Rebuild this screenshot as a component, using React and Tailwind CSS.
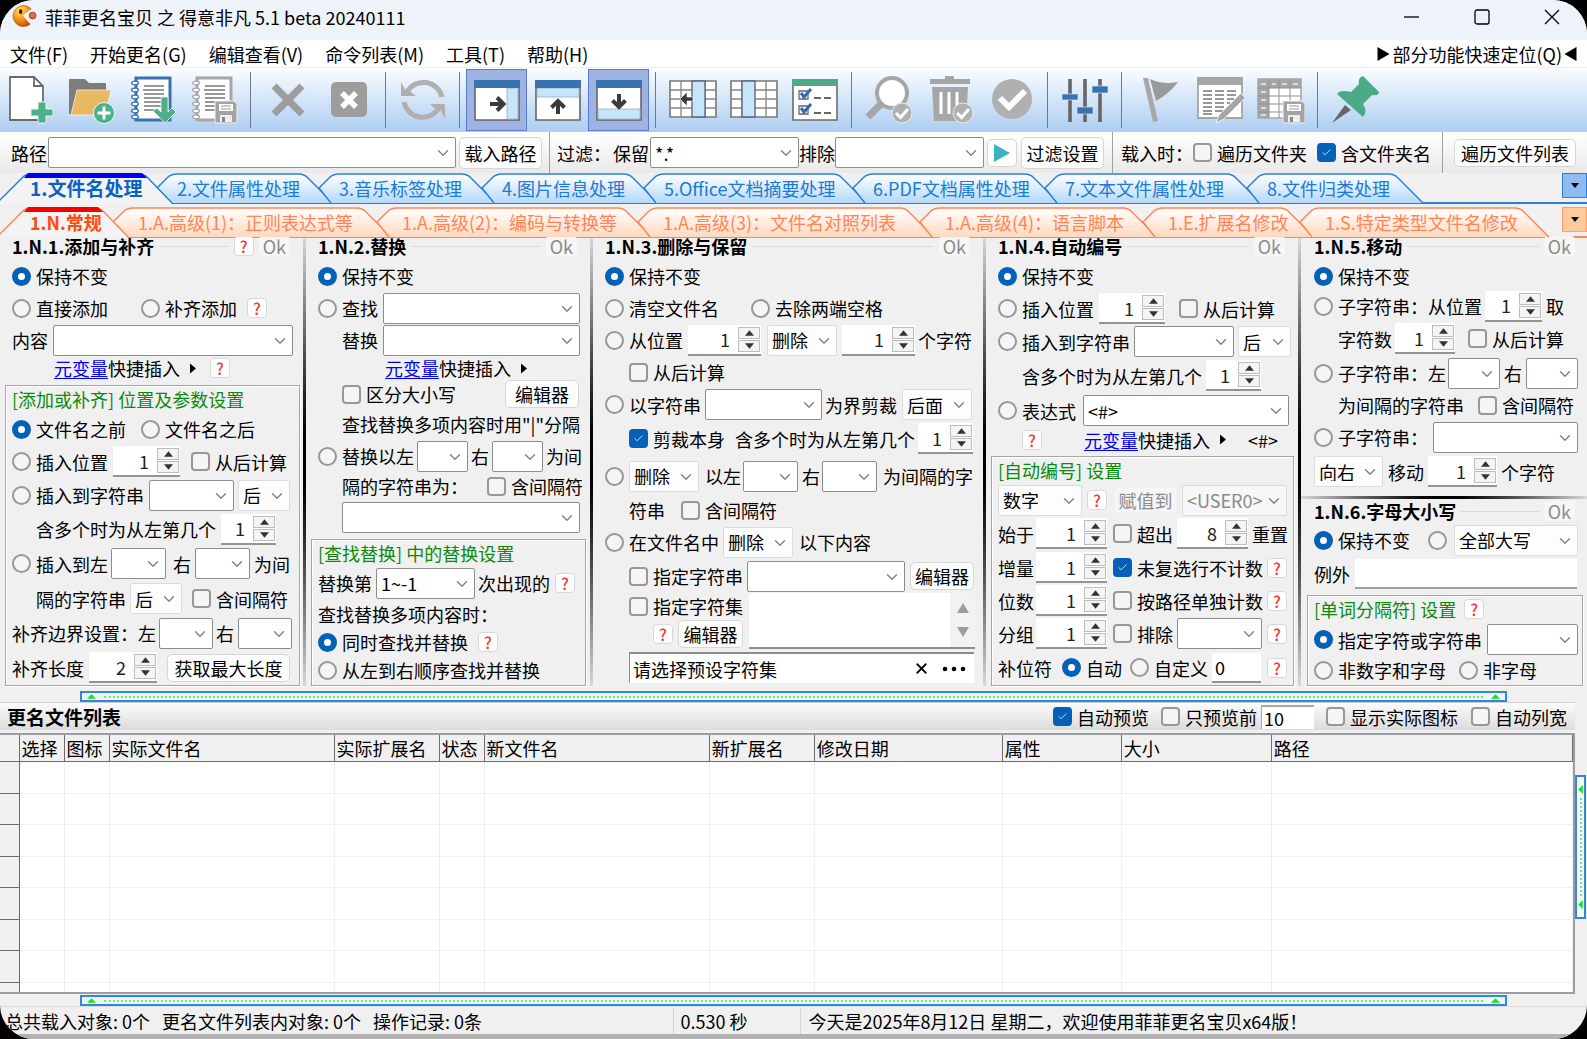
import React from "react";
import { Check, ChevronDown, X } from "lucide-react";

const MENUS = ["文件(F)", "开始更名(G)", "编辑查看(V)", "命令列表(M)", "工具(T)", "帮助(H)"];

const MAIN_TABS = [
  { label: "1.文件名处理", width: 157 },
  { label: "2.文件属性处理", width: 162 },
  { label: "3.音乐标签处理", width: 163 },
  { label: "4.图片信息处理", width: 162 },
  { label: "5.Office文档摘要处理", width: 209 },
  { label: "6.PDF文档属性处理", width: 192 },
  { label: "7.文本文件属性处理", width: 202 },
  { label: "8.文件归类处理", width: 162 },
];

const SUB_TABS = [
  { label: "1.N.常规", width: 113 },
  { label: "1.A.高级(1)：正则表达式等", width: 264 },
  { label: "1.A.高级(2)：编码与转换等", width: 261 },
  { label: "1.A.高级(3)：文件名对照列表", width: 282 },
  { label: "1.A.高级(4)：语言脚本", width: 223 },
  { label: "1.E.扩展名修改", width: 157 },
  { label: "1.S.特定类型文件名修改", width: 235 },
];

const COLUMNS = [
  { label: "", width: 19 },
  { label: "选择", width: 45 },
  { label: "图标", width: 45 },
  { label: "实际文件名", width: 225 },
  { label: "实际扩展名", width: 105 },
  { label: "状态", width: 45 },
  { label: "新文件名", width: 225 },
  { label: "新扩展名", width: 105 },
  { label: "修改日期", width: 188 },
  { label: "属性", width: 119 },
  { label: "大小", width: 150 },
  { label: "路径", width: 301 },
];

/* ---------- small controls ---------- */

function Row({ h = "h-8", className = "", children }) {
  return <div className={`flex items-center whitespace-nowrap ${h} ${className}`}>{children}</div>;
}

function Radio({ name, label, checked, className = "" }) {
  return (
    <label className={`flex shrink-0 items-center gap-[5px] ${className}`}>
      <input
        type="radio"
        name={name}
        defaultChecked={checked}
        aria-label={label || "按右侧选项处理"}
        className="size-[19px] shrink-0 appearance-none rounded-full border-2 border-[#989898] bg-[#f5f5f5] checked:border-[6px] checked:border-[#0560b8] checked:bg-white"
      />
      {label}
    </label>
  );
}

function CheckBox({ label, checked, className = "" }) {
  return (
    <label className={`flex shrink-0 items-center gap-[5px] ${className}`}>
      <span className="relative size-[19px] shrink-0">
        <input
          type="checkbox"
          defaultChecked={checked}
          className="peer block size-[19px] appearance-none rounded-[4px] border-2 border-[#989898] bg-[#f5f5f5] checked:border-[#0560b8] checked:bg-[#0560b8]"
        />
        <Check className="pointer-events-none absolute top-1 left-1 hidden size-[11px] text-[#cfe6fa] peer-checked:block" />
      </span>
      {label}
    </label>
  );
}

function Combo({ value = "", label, flat, disabled, className = "" }) {
  const look = flat
    ? "border-[#dcdcdc] bg-[#fdfdfd] pl-1"
    : "border-[#8c8c8c] bg-white pl-1";
  return (
    <span className={`relative shrink-0 ${className}`}>
      <select
        aria-label={label}
        disabled={disabled}
        className={`block h-[31px] w-full appearance-none rounded-[2px] border leading-none outline-none disabled:bg-[#f7f7f7] disabled:text-[#8a8a8a] ${look}`}
      >
        <option>{value}</option>
      </select>
      <ChevronDown
        className="pointer-events-none absolute top-[7px] right-1 size-[18px] text-[#808080]"
        strokeWidth={1.8}
      />
    </span>
  );
}

function Spin({ value, label, className = "" }) {
  return (
    <span className={`flex h-[31px] shrink-0 border-b-2 border-[#949494] bg-white ${className}`}>
      <input
        aria-label={label}
        defaultValue={value}
        className="w-0 min-w-0 flex-1 bg-white pr-2 text-right text-[#222] outline-none"
      />
      <span className="my-[2px] mr-px flex w-[22px] flex-col gap-px">
        <button type="button" aria-label={`${label} 增加`} className="flex flex-1 items-center justify-center border border-[#bdbdbd] bg-[#f4f4f4]">
          <svg viewBox="0 0 8 5" className="h-[6px] w-[9px]"><path d="M4 0 8 5H0Z" fill="#333" /></svg>
        </button>
        <button type="button" aria-label={`${label} 减少`} className="flex flex-1 items-center justify-center border border-[#bdbdbd] bg-[#f4f4f4]">
          <svg viewBox="0 0 8 5" className="h-[6px] w-[9px]"><path d="M4 5 8 0H0Z" fill="#333" /></svg>
        </button>
      </span>
    </span>
  );
}

function Help({ className = "" }) {
  return (
    <button
      type="button"
      className={`flex size-5 shrink-0 items-center justify-center rounded-[4px] border border-[#d8d8d8] bg-white text-base leading-none font-medium text-[#f5382f] ${className}`}
    >
      ?
    </button>
  );
}

function Btn({ children, disabled, className = "" }) {
  return (
    <button
      type="button"
      disabled={disabled}
      className={`h-[28px] shrink-0 rounded-[5px] border border-[#d6d6d6] bg-[#fdfdfd] text-center leading-none disabled:border-[#ececec] disabled:bg-[#f5f5f5] disabled:text-[#8a8a8a] ${className}`}
    >
      {children}
    </button>
  );
}

function MetaInsert({ className = "" }) {
  return (
    <span className={`flex shrink-0 items-center ${className}`}>
      <a href="#meta" className="text-[#0000f0] underline underline-offset-2">元变量</a>
      快捷插入
      <svg viewBox="0 0 6 10" className="ml-[10px] h-[11px] w-[6px]"><path d="M0 0 6 5 0 10Z" /></svg>
    </span>
  );
}

function PanelTitle({ children, help, className = "" }) {
  return (
    <div className={`flex h-4 shrink-0 items-center gap-[5px] ${className}`}>
      <h2 className="font-bold">{children}</h2>
      <span className="h-px flex-1 bg-[#dcdcdc]" />
      {help && <Help />}
      <button type="button" disabled className="h-5 rounded-[4px] bg-[#f6f6f6] px-1 leading-none text-[#8c8c8c]">
        Ok
      </button>
    </div>
  );
}

function Panel({ last, children }) {
  return (
    <section className="flex min-w-0">
      <div className="flex min-w-0 flex-1 flex-col">{children}</div>
      {!last && <div className="w-[3px] bg-linear-to-b from-[#d8d8d8] via-black to-[#d8d8d8]" />}
    </section>
  );
}

function Group({ title, help, children, className = "" }) {
  return (
    <div className={`mt-[5px] flex-1 border border-[#a6a6a6] pl-[6px] shadow-[inset_1px_1px_0_#fff,1px_1px_0_#fff] ${className}`}>
      <Row h="h-[27px]" className="pb-px text-[#0b8a0b]">
        <h3>{title}</h3>
        {help && <Help className="ml-2" />}
      </Row>
      {children}
    </div>
  );
}

/* ---------- toolbar icons ---------- */

const G = "#a6a6a6";

function Icon({ children }) {
  return <svg viewBox="0 0 48 48" className="size-12" fill="none">{children}</svg>;
}

function NotePad({ frame, page = "#fff" }) {
  return (
    <>
      <path d="M7 2H41V44H7Z" fill={page} stroke={frame} strokeWidth="3" />
      <path d="M15 10H35M14 14H35M15 18H35M15 22H35M15 26H35M15 30H32M15 34H30" stroke="#777" strokeWidth="1.4" />
      <g fill="#fff" stroke={frame} strokeWidth="1.3">
        {[7, 14, 21, 28, 35, 41].map((y) => (
          <ellipse key={y} cx="6" cy={y} rx="3.4" ry="1.8" />
        ))}
      </g>
    </>
  );
}

function Floppy({ x, y }) {
  return (
    <g transform={`translate(${x} ${y})`}>
      <path d="M0 0H19L22 3V22H0Z" fill="#a3a3a3" stroke="#f3f3f3" />
      <path d="M4 3H18V10H4Z" fill="#fff" />
      <path d="M6 5H16M6 8H16" stroke="#999" />
      <path d="M5 14H17V21H5Z" fill="#eee" />
      <path d="M7 16H10V21H7Z" fill="#888" />
    </g>
  );
}

function WindowIcon({ side }) {
  return (
    <Icon>
      <path d="M2 6H46V44H2Z" fill="#fff" stroke="#666" strokeWidth="1.6" />
      {side === "right" && <path d="M34 12H45V43H34Z" fill="#c5e6fa" stroke="#9ab" strokeWidth=".8" />}
      {side === "top" && <path d="M3 12H45V21H3Z" fill="#c5e6fa" stroke="#9ab" strokeWidth=".8" />}
      {side === "bottom" && <path d="M3 33H45V43H3Z" fill="#c5e6fa" stroke="#9ab" strokeWidth=".8" />}
      <path d="M1 4H47V12H1Z" fill="#3a72b0" />
      <g stroke="#3b3b3b" strokeWidth="4">
        {side === "right" && <path d="M17 28H30M24 21.500L30.500 28L24 34.500" />}
        {side === "top" && <path d="M24 38V25M17.500 31.500L24 25L30.500 31.500" />}
        {side === "bottom" && <path d="M24 18V31M17.500 24.500L24 31L30.500 24.500" />}
      </g>
    </Icon>
  );
}

function GridIcon({ arrow }) {
  return (
    <Icon>
      <path d="M1 5H47V41H1Z" fill="#fff" stroke="#777" strokeWidth="1.6" />
      <path d="M12 5V41M24 5V41M36 5V41M1 14H47M1 23H47M1 32H47" stroke="#858585" strokeWidth="1.3" />
      <path d={arrow ? "M23 5H36V41H23Z" : "M12 5H25V41H12Z"} fill="#c5e6fa" stroke="#667" strokeWidth="1.4" />
      {arrow && <path d="M11 23 18 16V21H24V25H18V30Z" fill="#3b3b3b" stroke="#fff" strokeWidth=".6" />}
    </Icon>
  );
}

function TickBadge() {
  return (
    <>
      <circle cx="37" cy="37" r="10" fill="#b0b0b0" stroke="#e6edf5" />
      <path d="M31 37 35.500 41.500 43 33" stroke="#fff" strokeWidth="3" />
    </>
  );
}

const TOOLS = [
  [
    { name: "新建", icon: (
      <Icon>
        <path d="M3 1H27L36 10V44H3Z" fill="#fff" stroke="#6b6b6b" strokeWidth="1.8" />
        <path d="M27 1V10H36" stroke="#6b6b6b" strokeWidth="1.8" />
        <path d="M31 26H39V33H46V40H39V47H31V40H24V33H31Z" fill="#4cb088" stroke="#e8f4f4" />
      </Icon>
    ) },
    { name: "添加文件夹", icon: (
      <Icon>
        <path d="M1 3H17L21 7H38V15H10L4 38H1Z" fill="#7d7d7d" />
        <path d="M9 14H43L37 39H3Z" fill="#e9b863" stroke="#eef3f8" strokeWidth=".8" />
        <circle cx="36" cy="37" r="10.500" fill="#4cb088" stroke="#eef6f6" />
        <path d="M36 30.500V43.500M29.500 37H42.500" stroke="#fff" strokeWidth="3" />
      </Icon>
    ) },
    { name: "载入列表", icon: (
      <Icon>
        <NotePad frame="#3a72b0" />
        <path d="M32 21H39V36L43 32L47 36L36 47L24 35L28 32L32 36Z" fill="#4cb088" stroke="#f4faf8" strokeWidth=".8" />
      </Icon>
    ) },
    { name: "保存列表", icon: (
      <Icon>
        <NotePad frame={G} />
        <Floppy x={25} y={25} />
      </Icon>
    ) },
  ],
  [
    { name: "移除", icon: <Icon><path d="M10 10 38 38M38 10 10 38" stroke="#9d9d9d" strokeWidth="7" /></Icon> },
    { name: "清空", icon: (
      <Icon>
        <rect x="6" y="6" width="36" height="35" rx="5" fill="#9d9d9d" />
        <path d="M17 17 31 31M31 17 17 31" stroke="#fff" strokeWidth="5.500" />
      </Icon>
    ) },
  ],
  [
    { name: "刷新", icon: (
      <Icon>
        <g stroke="#b0b0b0" strokeWidth="5">
          <path d="M8 16A19 19 0 0 1 43 21" />
          <path d="M41 30A19 19 0 0 1 5 26" />
        </g>
        <path d="M2 6V20H17L12 16 7 15Z" fill="#b0b0b0" />
        <path d="M46 43V28H31L35 32 41 33Z" fill="#b0b0b0" />
      </Icon>
    ) },
  ],
  [
    { name: "右侧面板", active: true, icon: <WindowIcon side="right" /> },
    { name: "上方面板", icon: <WindowIcon side="top" /> },
    { name: "下方面板", active: true, icon: <WindowIcon side="bottom" /> },
  ],
  [
    { name: "移动列", icon: <GridIcon arrow /> },
    { name: "列设置", icon: <GridIcon /> },
    { name: "选项", icon: (
      <Icon>
        <path d="M2 4H46V44H2Z" fill="#fff" stroke="#6b6b6b" strokeWidth="1.6" />
        <path d="M1 3H47V10H1Z" fill="#4fa886" />
        <g stroke="#666" strokeWidth="1.3">
          <path d="M8 15H17V23H8ZM8 30H17V38H8Z" />
          <path d="M23 22H30M33 22H40M23 37H30M33 37H40" strokeWidth="1.800" />
        </g>
        <path d="M10 17 13 21 20 13M10 32 13 36 20 28" stroke="#2f6cb5" strokeWidth="3" />
      </Icon>
    ) },
  ],
  [
    { name: "查找", icon: (
      <Icon>
        <path d="M16 28 3 41" stroke={G} strokeWidth="7" />
        <circle cx="27" cy="17" r="15" fill="#fff" stroke={G} strokeWidth="4" />
        <TickBadge />
      </Icon>
    ) },
    { name: "删除", icon: (
      <Icon>
        <path d="M19 0H28V3H44V8H4V3H19Z" fill={G} />
        <path d="M6 11H42L40 45H8Z" fill={G} />
        <path d="M15 16V38M23 16V38M31 16V31" stroke="#fff" strokeWidth="3" />
        <TickBadge />
      </Icon>
    ) },
    { name: "确认", icon: (
      <Icon>
        <circle cx="25" cy="23" r="20" fill="#b0b0b0" />
        <path d="M13 22 22 31 38 15" stroke="#fff" strokeWidth="6" />
      </Icon>
    ) },
  ],
  [
    { name: "设置", icon: (
      <Icon>
        <path d="M9 3V46M24 3V46M39 3V46" stroke="#666" strokeWidth="3.600" />
        <path d="M1 18H17V24H1ZM16 31H32V38H16ZM31 10H47V17H31Z" fill="#3a72b0" stroke="#e6eef7" strokeWidth=".6" />
      </Icon>
    ) },
  ],
  [
    { name: "标记", icon: (
      <Icon>
        <path d="M8 2H13L23 45L18 46Z" fill="#a8a8a8" />
        <path d="M15 3Q28 9 43 6Q35 17 21 25Z" fill="#9a9a9a" />
      </Icon>
    ) },
    { name: "编辑表格", icon: (
      <Icon>
        <path d="M2 3H46V42H2Z" fill="#fff" stroke={G} strokeWidth="1.800" />
        <path d="M1 1H47V9H1Z" fill={G} />
        <path d="M7 15H16M7 19H16M7 23H16M7 27H16M7 31H16M7 35H16M7 38H16M19 15H28M19 19H28M19 23H28M19 27H28M19 31H28M19 35H27M31 15H40M31 19H40M31 23H38M31 27H34" stroke="#777" strokeWidth="1.300" />
        <path d="M45 17 49 22 28 43 20 47 23 39Z" fill={G} stroke="#fff" strokeWidth=".8" />
      </Icon>
    ) },
    { name: "保存表格", icon: (
      <Icon>
        <path d="M1 3H44V42H1Z" fill="#fff" stroke={G} strokeWidth="1.500" />
        <path d="M1 3H44V12H1ZM1 12H12V42H1Z" fill={G} />
        <path d="M12 3V42M22 3V42M33 3V42M1 12H44M1 20H44M1 28H44M1 36H44" stroke="#929292" />
        <path d="M4 8H9M15 8H19M25 8H30M36 8H41M4 16H9M4 24H9M4 32H9M4 39H9" stroke="#eee" strokeWidth="1.500" />
        <Floppy x={26} y={25} />
      </Icon>
    ) },
  ],
  [
    { name: "置顶", icon: (
      <Icon>
        <path d="M1 47 14 29 20 34Z" fill="#666" />
        <path d="M32 0 48 16Q48 20 41 19L32 28Q37 36 32 41L6 18Q9 13 20 16L28 8Q27 1 32 0Z" fill="#4cab86" />
      </Icon>
    ) },
  ],
];

/* ---------- tab strips ---------- */

function TabStrip({ tabs, tone, label }) {
  const blue = tone === "blue";
  const line = blue ? "#2a80d8" : "#ff8458";
  return (
    <nav
      aria-label={label}
      className={`flex h-[31px] shrink-0 items-stretch border-b-2 ${blue ? "border-[#2a80d8]" : "border-[#ff8458]"}`}
    >
      <svg width="0" height="0" className="absolute">
        <linearGradient id={`fill-${tone}`} x2="0" y2="1">
          <stop offset="0" stopColor="#fff" />
          <stop offset="1" stopColor={blue ? "#b4d8fa" : "#ffd9bf"} />
        </linearGradient>
      </svg>
      {tabs.map((tab, i) => {
        const w = tab.width;
        const first = i === 0;
        const shape = first
          ? `M-4 31 L22 5 Q26 1 30 1 H${w - 18} Q${w - 13} 1 ${w - 9} 5 L${w + 16} 31`
          : `M12 30 L0 15 L10 5 Q14 1 20 1 H${w - 20} Q${w - 15} 1 ${w - 11} 5 L${w + 14} 30`;
        return (
          <button
            key={tab.label}
            type="button"
            style={{ width: w }}
            className={`relative shrink-0 text-left whitespace-nowrap ${
              first
                ? `z-10 pl-[30px] font-bold ${blue ? "text-[19px] text-[#0a62c4]" : "text-[#ff4a10]"}`
                : blue ? "pl-5 text-[#1b7bd6]" : "pl-[25px] text-[#ff8458]"
            }`}
          >
            <svg className="absolute top-0 left-0 overflow-visible" width={w} height="31">
              <path d={shape} fill={first ? "#f3f3f3" : `url(#fill-${tone})`} stroke={line} strokeWidth="1.5" />
              {first && <path d={`M24 5 L28 0 H${w - 15} L${w - 10} 5Z`} fill={blue ? "#0000f5" : "#f50000"} />}
            </svg>
            <span className="relative leading-[30px]">{tab.label}</span>
          </button>
        );
      })}
      <button
        type="button"
        aria-label="更多"
        className={`mb-1 ml-auto flex w-[25px] items-center justify-center border ${
          blue ? "border-[#2a80d8] bg-[#8fbcf0]" : "border-[#ffa070] bg-[#ffcb9c]"
        }`}
      >
        <svg viewBox="0 0 8 5" className="h-[5px] w-2"><path d="M0 0H8L4 5Z" /></svg>
      </button>
    </nav>
  );
}

function Splitter({ vertical }) {
  if (vertical) {
    return (
      <div className="mt-[42px] mr-px flex h-[144px] w-[11px] shrink-0 flex-col items-center border-2 border-[#3487d4] bg-[#f4fbff] py-2">
        <svg viewBox="0 0 5 10" className="h-[9px] w-[5px]"><path d="M5 0V10L0 5Z" fill="#10e810" /></svg>
        <span className="my-1 flex-1 border-l-2 border-dotted border-[#7fdc7f]" />
        <svg viewBox="0 0 5 10" className="h-[9px] w-[5px]"><path d="M5 0V10L0 5Z" fill="#10e810" /></svg>
      </div>
    );
  }
  return (
    <div className="mx-20 flex h-[11px] items-center gap-2 border-2 border-[#3487d4] bg-[#eaf7fd] px-[5px]">
      <svg viewBox="0 0 10 5" className="h-[5px] w-[9px]"><path d="M0 5H10L5 0Z" fill="#10e810" /></svg>
      <span className="flex-1 border-t-2 border-dotted border-[#7fdc7f]" />
      <svg viewBox="0 0 10 5" className="h-[5px] w-[9px]"><path d="M0 5H10L5 0Z" fill="#10e810" /></svg>
    </div>
  );
}

/* ---------- window parts ---------- */

function TitleBar() {
  return (
    <header className="flex h-10 shrink-0 items-center bg-[#edf3f9] pb-[7px] pl-3">
      <svg viewBox="0 0 26 24" className="h-[23px] w-[25px]">
        <defs>
          <radialGradient id="pac" cx=".4" cy=".25" r=".8">
            <stop offset="0" stopColor="#ffe45c" />
            <stop offset=".5" stopColor="#f8981c" />
            <stop offset="1" stopColor="#c04808" />
          </radialGradient>
        </defs>
        <path d="M11 11 20 4A11 11 0 1 0 19 20Z" fill="url(#pac)" stroke="#b04a10" strokeWidth=".6" />
        <path d="M11 11 20 4Q16 8 16 12Q16 17 19 20Z" fill="#fff3d0" />
        <ellipse cx="9" cy="7" rx="1.800" ry="2.500" fill="#3a1a08" />
        <circle cx="21.500" cy="11" r="3.500" fill="#d86a5c" stroke="#a03a34" />
      </svg>
      <h1 className="ml-2">菲菲更名宝贝 之 得意非凡 5.1 beta 20240111</h1>
      <div className="mr-[27px] ml-auto flex gap-[54px]">
        <button type="button" aria-label="最小化" className="size-4">
          <svg viewBox="0 0 16 16" stroke="#000" strokeWidth="1.300"><path d="M0 8H15" /></svg>
        </button>
        <button type="button" aria-label="最大化" className="size-4">
          <svg viewBox="0 0 16 16" fill="none" stroke="#000" strokeWidth="1.300"><rect x="1" y="1" width="14" height="14" rx="2" /></svg>
        </button>
        <button type="button" aria-label="关闭" className="size-4">
          <svg viewBox="0 0 16 16" stroke="#000" strokeWidth="1.300"><path d="M1 1 15 15M15 1 1 15" /></svg>
        </button>
      </div>
    </header>
  );
}

function MenuBar() {
  return (
    <nav className="flex h-7 shrink-0 items-center gap-[22px] border-b border-[#f0f0f0] bg-white px-[10px]">
      {MENUS.map((m) => (
        <button key={m} type="button">{m}</button>
      ))}
      <button type="button" className="ml-auto flex items-center">
        <svg viewBox="0 0 12 14" className="mr-[2px] h-[14px] w-[13px]"><path d="M0 0 12 7 0 14Z" /></svg>
        部分功能快速定位(Q)
        <svg viewBox="0 0 12 14" className="ml-[2px] h-[14px] w-[13px]"><path d="M12 0 0 7 12 14Z" /></svg>
      </button>
    </nav>
  );
}

function Toolbar() {
  return (
    <div className="flex h-16 shrink-0 items-stretch bg-linear-to-b from-[#fbfdff] to-[#adcdf1] py-px">
      {TOOLS.map((group, i) => (
        <React.Fragment key={group[0].name}>
          {i > 0 && <span className="mx-[6px] my-[3px] w-px bg-[#6f7a86]" />}
          {group.map((t) => (
            <button
              key={t.name}
              type="button"
              aria-label={t.name}
              className={`flex w-[61px] items-center justify-center ${
                t.active ? "border border-[#5a7cd0] bg-[#9fb3e2]" : ""
              }`}
            >
              {t.icon}
            </button>
          ))}
        </React.Fragment>
      ))}
    </div>
  );
}

function PathBar() {
  return (
    <div className="flex h-[41px] shrink-0 items-center bg-linear-to-b from-white to-[#e9e9e9] pl-[11px] whitespace-nowrap">
      路径
      <Combo label="路径" className="ml-px min-w-0 flex-1" />
      <Btn className="ml-[3px] h-[32px] w-[83px]">载入路径</Btn>
      <span className="mx-[7px] w-px self-stretch bg-[#a0a0a0]" />
      <span>过滤：</span>
      <span className="ml-[2px]">保留</span>
      <Combo label="保留" value="*.*" className="ml-px w-[149px]" />
      排除
      <Combo label="排除" className="w-[149px]" />
      <Btn className="ml-[3px] flex w-[30px] items-center justify-center">
        <svg viewBox="0 0 16 18" className="h-[18px] w-4"><path d="M0 0 16 9 0 18Z" fill="#3fb3bd" /></svg>
      </Btn>
      <Btn className="ml-1 h-[32px] w-[83px]">过滤设置</Btn>
      <span className="mx-[8px] w-px self-stretch bg-[#a0a0a0]" />
      载入时：
      <CheckBox label="遍历文件夹" />
      <CheckBox label="含文件夹名" checked className="ml-[10px]" />
      <span className="mx-[11px] w-px self-stretch bg-[#a0a0a0]" />
      <Btn className="mr-[11px] w-[122px]">遍历文件列表</Btn>
    </div>
  );
}

function AddPanel() {
  return (
    <Panel>
      <PanelTitle help className="mr-[13px] ml-3">1.N.1.添加与补齐</PanelTitle>
      <Row className="mt-[6px] pl-3"><Radio name="add" label="保持不变" checked /></Row>
      <Row className="pl-3">
        <Radio name="add" label="直接添加" />
        <Radio name="add" label="补齐添加" className="ml-[33px]" />
        <Help className="ml-[10px]" />
      </Row>
      <Row className="pl-3">
        内容
        <Combo label="内容" className="mr-[10px] ml-[5px] flex-1" />
      </Row>
      <Row h="h-6" className="pl-[54px]">
        <MetaInsert />
        <Help className="ml-[14px]" />
      </Row>
      <Group title="[添加或补齐] 位置及参数设置" className="mr-[3px] ml-[5px]">
        <Row>
          <Radio name="add-pos" label="文件名之前" checked />
          <Radio name="add-pos" label="文件名之后" className="ml-[15px]" />
        </Row>
        <Row h="h-[33px]">
          <Radio name="add-pos" label="插入位置" />
          <Spin label="插入位置" value="1" className="ml-[5px] w-[67px]" />
          <CheckBox label="从后计算" className="ml-[11px]" />
        </Row>
        <Row h="h-[34px]">
          <Radio name="add-pos" label="插入到字符串" />
          <Combo label="字符串" className="ml-[5px] w-[85px]" />
          <Combo flat label="方向" value="后" className="ml-1 w-[52px]" />
        </Row>
        <Row h="h-[34px]" className="pl-6">
          含多个时为从左第几个
          <Spin label="第几个" value="1" className="ml-[5px] w-[55px]" />
        </Row>
        <Row h="h-[35px]">
          <Radio name="add-pos" label="插入到左" />
          <Combo label="左" className="ml-[3px] mr-[7px] w-[55px]" />
          右
          <Combo label="右" className="mr-1 ml-1 w-[55px]" />
          为间
        </Row>
        <Row h="h-[35px]" className="pl-6">
          隔的字符串
          <Combo flat label="方向" value="后" className="ml-1 w-[52px]" />
          <CheckBox label="含间隔符" className="ml-[10px]" />
        </Row>
        <Row h="h-[34px]">
          补齐边界设置：左
          <Combo label="左边界" className="mr-[3px] ml-[3px] w-[54px]" />
          右
          <Combo label="右边界" className="ml-1 w-[54px]" />
        </Row>
        <Row h="h-[35px]">
          补齐长度
          <Spin label="补齐长度" value="2" className="ml-[5px] w-[68px]" />
          <Btn className="ml-[10px] w-[123px]">获取最大长度</Btn>
        </Row>
      </Group>
    </Panel>
  );
}

function ReplacePanel() {
  return (
    <Panel>
      <PanelTitle className="mr-[13px] ml-3">1.N.2.替换</PanelTitle>
      <Row className="mt-[6px] pl-3"><Radio name="rep" label="保持不变" checked /></Row>
      <Row className="pl-3">
        <Radio name="rep" label="查找" />
        <Combo label="查找" className="mr-[10px] ml-[5px] flex-1" />
      </Row>
      <Row className="pl-9">
        替换
        <Combo label="替换" className="mr-[10px] ml-[5px] flex-1" />
      </Row>
      <Row h="h-6" className="pl-[79px]"><MetaInsert /></Row>
      <Row h="h-7" className="pl-9">
        <CheckBox label="区分大小写" />
        <Btn className="mr-[11px] ml-auto w-[74px]">编辑器</Btn>
      </Row>
      <Row className="pl-9">查找替换多项内容时用"|"分隔</Row>
      <Row className="pl-3">
        <Radio name="rep" label="替换以左" />
        <Combo label="左" className="mr-[3px] ml-[3px] w-[51px]" />
        右
        <Combo label="右" className="mr-[3px] ml-[3px] w-[51px]" />
        为间
      </Row>
      <Row h="h-7" className="pl-9">
        隔的字符串为：
        <CheckBox label="含间隔符" className="ml-[19px]" />
      </Row>
      <Row h="h-[34px]" className="pl-9">
        <Combo label="替换字符串" className="mr-[10px] flex-1" />
      </Row>
      <Group title="[查找替换] 中的替换设置" className="mr-[4px] ml-[5px]">
        <Row>
          替换第
          <Combo label="第几次" value="1~-1" className="mr-[3px] ml-1 w-[99px]" />
          次出现的
          <Help className="ml-[5px]" />
        </Row>
        <Row h="h-[29px]">查找替换多项内容时：</Row>
        <Row h="h-7">
          <Radio name="rep-order" label="同时查找并替换" checked />
          <Help className="ml-[10px]" />
        </Row>
        <Row h="h-7"><Radio name="rep-order" label="从左到右顺序查找并替换" /></Row>
      </Group>
    </Panel>
  );
}

function DeletePanel() {
  return (
    <Panel>
      <PanelTitle className="mr-[13px] ml-3">1.N.3.删除与保留</PanelTitle>
      <Row className="mt-[6px] pl-3"><Radio name="del" label="保持不变" checked /></Row>
      <Row className="pl-3">
        <Radio name="del" label="清空文件名" />
        <Radio name="del" label="去除两端空格" className="ml-8" />
      </Row>
      <Row className="pl-3">
        <Radio name="del" label="从位置" />
        <Spin label="位置" value="1" className="ml-[5px] w-[73px]" />
        <Combo flat label="操作" value="删除" className="ml-[6px] w-[70px]" />
        <Spin label="字符数" value="1" className="mr-[3px] ml-[5px] w-[73px]" />
        个字符
      </Row>
      <Row className="pl-9"><CheckBox label="从后计算" /></Row>
      <Row h="h-[33px]" className="pl-3">
        <Radio name="del" label="以字符串" />
        <Combo label="字符串" className="mr-[3px] ml-1 w-[117px]" />
        为界剪裁
        <Combo flat label="位置" value="后面" className="ml-[5px] w-[70px]" />
      </Row>
      <Row h="h-[35px]" className="pl-9">
        <CheckBox label="剪裁本身" checked className="mr-[10px]" />
        含多个时为从左第几个
        <Spin label="第几个" value="1" className="ml-[3px] w-[55px]" />
      </Row>
      <Row h="h-10" className="pl-3">
        <Radio name="del" label="" />
        <Combo flat label="操作" value="删除" className="mr-[6px] ml-[5px] w-[70px]" />
        以左
        <Combo label="左" className="mr-1 ml-[2px] w-[55px]" />
        右
        <Combo label="右" className="mr-[6px] ml-[2px] w-[55px]" />
        为间隔的字
      </Row>
      <Row h="h-7" className="pl-9">
        符串
        <CheckBox label="含间隔符" className="ml-4" />
      </Row>
      <Row h="h-9" className="pl-3">
        <Radio name="del" label="在文件名中" />
        <Combo flat label="操作" value="删除" className="mr-[6px] ml-1 w-[70px]" />
        以下内容
      </Row>
      <Row className="pl-9">
        <CheckBox label="指定字符串" />
        <Combo label="指定字符串" className="ml-1 w-[158px]" />
        <Btn className="ml-[5px] w-[64px]">编辑器</Btn>
      </Row>
      <div className="mt-px flex h-[56px] pl-9">
        <div className="w-[115px] shrink-0">
          <Row h="h-[26px]"><CheckBox label="指定字符集" /></Row>
          <Row h="h-[30px]" className="pl-6">
            <Help />
            <Btn className="ml-[5px] h-[27px] w-[65px]">编辑器</Btn>
          </Row>
        </div>
        <div className="ml-[5px] flex w-[226px] border-b-2 border-[#8c8c8c] bg-white">
          <textarea aria-label="字符集" className="min-w-0 flex-1 resize-none outline-none" />
          <div className="flex w-[25px] flex-col items-center justify-between bg-[#f2f2f2] py-[10px]">
            <svg viewBox="0 0 12 10" className="h-[10px] w-3"><path d="M6 0 12 10H0Z" fill="#9c9c9c" /></svg>
            <svg viewBox="0 0 12 10" className="h-[10px] w-3"><path d="M6 10 12 0H0Z" fill="#9c9c9c" /></svg>
          </div>
        </div>
      </div>
      <div className="mt-[3px] ml-9 flex h-[31px] w-[345px] items-center border-t-2 border-l border-[#8c8c8c] bg-white pr-2 pl-[3px]">
        <input aria-label="预设字符集" defaultValue="请选择预设字符集" className="min-w-0 flex-1 outline-none" />
        <button type="button" aria-label="清除"><X className="size-[17px]" strokeWidth={2.5} /></button>
        <button type="button" aria-label="选择" className="ml-3">
          <svg viewBox="0 0 24 6" className="h-[6px] w-6"><circle cx="3" cy="3" r="2.3" /><circle cx="12" cy="3" r="2.3" /><circle cx="21" cy="3" r="2.3" /></svg>
        </button>
      </div>
    </Panel>
  );
}

function NumberPanel() {
  return (
    <Panel>
      <PanelTitle className="mr-[13px] ml-3">1.N.4.自动编号</PanelTitle>
      <Row className="mt-[6px] pl-3"><Radio name="num" label="保持不变" checked /></Row>
      <Row h="h-[33px]" className="pl-3">
        <Radio name="num" label="插入位置" />
        <Spin label="插入位置" value="1" className="ml-[5px] w-[66px]" />
        <CheckBox label="从后计算" className="ml-[14px]" />
      </Row>
      <Row h="h-[33px]" className="pl-3">
        <Radio name="num" label="插入到字符串" />
        <Combo label="字符串" className="ml-1 w-[100px]" />
        <Combo flat label="方向" value="后" className="ml-1 w-[53px]" />
      </Row>
      <Row h="h-[35px]" className="pl-9">
        含多个时为从左第几个
        <Spin label="第几个" value="1" className="ml-1 w-[55px]" />
      </Row>
      <Row h="h-[35px]" className="pl-3">
        <Radio name="num" label="表达式" />
        <Combo label="表达式" value="<#>" className="mr-[9px] ml-[7px] flex-1" />
      </Row>
      <Row h="h-[23px]" className="pl-9">
        <Help />
        <MetaInsert className="ml-[42px]" />
        <span className="ml-[22px]">&lt;#&gt;</span>
      </Row>
      <Group title="[自动编号] 设置" className="mr-[4px] ml-[5px]">
        <Row>
          <Combo flat label="编号类型" value="数字" className="w-[84px]" />
          <Help className="ml-[5px]" />
          <Btn disabled className="ml-[6px] w-[65px]">赋值到</Btn>
          <Combo flat disabled label="变量" value="<USER0>" className="ml-1 w-[105px]" />
        </Row>
        <Row h="h-[35px]">
          始于
          <Spin label="始于" value="1" className="ml-[2px] w-[71px]" />
          <CheckBox label="超出" className="ml-[6px]" />
          <Spin label="超出" value="8" className="mr-1 ml-1 w-[71px]" />
          重置
        </Row>
        <Row h="h-[33px]">
          增量
          <Spin label="增量" value="1" className="ml-[2px] w-[71px]" />
          <CheckBox label="未复选行不计数" checked className="ml-[6px]" />
          <Help className="ml-1" />
        </Row>
        <Row h="h-[33px]">
          位数
          <Spin label="位数" value="1" className="ml-[2px] w-[71px]" />
          <CheckBox label="按路径单独计数" className="ml-[6px]" />
          <Help className="ml-1" />
        </Row>
        <Row h="h-[33px]">
          分组
          <Spin label="分组" value="1" className="ml-[2px] w-[71px]" />
          <CheckBox label="排除" className="ml-[6px]" />
          <Combo label="排除" className="ml-1 w-[85px]" />
          <Help className="ml-[5px]" />
        </Row>
        <Row h="h-[35px]">
          补位符
          <Radio name="pad" label="自动" checked className="ml-[10px]" />
          <Radio name="pad" label="自定义" className="ml-2" />
          <input aria-label="自定义补位符" defaultValue="0" className="ml-1 h-[30px] w-[49px] border-b-2 border-[#949494] bg-white pl-[3px] outline-none" />
          <Help className="ml-[6px]" />
        </Row>
      </Group>
    </Panel>
  );
}

function MovePanel() {
  return (
    <Panel last>
      <PanelTitle className="mr-3 ml-[13px]">1.N.5.移动</PanelTitle>
      <Row className="mt-[6px] pl-[13px]"><Radio name="move" label="保持不变" checked /></Row>
      <Row h="h-7" className="pl-[13px]">
        <Radio name="move" label="子字符串：从位置" />
        <Spin label="从位置" value="1" className="mr-1 ml-[3px] w-[57px]" />
        取
      </Row>
      <Row h="h-[37px]" className="pl-[37px]">
        字符数
        <Spin label="字符数" value="1" className="ml-[3px] w-[60px]" />
        <CheckBox label="从后计算" className="ml-[13px]" />
      </Row>
      <Row className="pl-[13px]">
        <Radio name="move" label="子字符串：左" />
        <Combo label="左" className="mr-1 ml-[2px] w-[52px]" />
        右
        <Combo label="右" className="ml-1 w-[52px]" />
      </Row>
      <Row className="pl-[37px]">
        为间隔的字符串
        <CheckBox label="含间隔符" className="ml-[14px]" />
      </Row>
      <Row className="pl-[13px]">
        <Radio name="move" label="子字符串：" />
        <Combo label="子字符串" className="mr-[9px] ml-[5px] flex-1" />
      </Row>
      <Row h="h-[37px]" className="pl-[13px]">
        <Combo flat label="方向" value="向右" className="mr-[5px] w-[69px]" />
        移动
        <Spin label="移动" value="1" className="mr-1 ml-1 w-[69px]" />
        个字符
      </Row>
      <div className="mt-[6px] mb-1 h-[3px] bg-linear-to-r from-[#d8d8d8] via-black to-[#d8d8d8]" />
      <PanelTitle className="mr-3 ml-[13px]">1.N.6.字母大小写</PanelTitle>
      <Row h="h-9" className="mt-[3px] pl-[13px]">
        <Radio name="case" label="保持不变" checked />
        <Radio name="case" label="" className="ml-[18px]" />
        <Combo flat label="大小写" value="全部大写" className="mr-[9px] ml-[7px] flex-1" />
      </Row>
      <Row className="pl-[13px]">
        <label htmlFor="except">例外</label>
        <input id="except" className="mr-[10px] ml-[5px] h-[30px] min-w-0 flex-1 border-b-2 border-[#a0a0a0] bg-white outline-none" />
      </Row>
      <Group title="[单词分隔符] 设置" help className="mr-[4px] ml-[6px]">
        <Row h="h-[33px]">
          <Radio name="word" label="指定字符或字符串" checked />
          <Combo label="分隔符" className="mr-1 ml-[5px] flex-1" />
        </Row>
        <Row h="h-7">
          <Radio name="word" label="非数字和字母" />
          <Radio name="word" label="非字母" className="ml-[13px]" />
        </Row>
      </Group>
    </Panel>
  );
}

function ListHeader() {
  return (
    <div className="mr-3 flex h-[28px] shrink-0 items-center border-t border-[#d0d0d0] bg-linear-to-b from-[#fbfbfb] to-[#dcdcdc] pr-2 pl-[7px] whitespace-nowrap">
      <h2 className="mr-auto text-[19px] font-bold">更名文件列表</h2>
      <CheckBox label="自动预览" checked />
      <CheckBox label="只预览前" className="ml-3" />
      <input
        aria-label="预览数量"
        defaultValue="10"
        className="ml-[4px] h-6 w-[53px] border-t-2 border-l border-[#a8a8a8] bg-white pl-[2px] outline-none"
      />
      <CheckBox label="显示实际图标" className="ml-3" />
      <CheckBox label="自动列宽" className="ml-[13px]" />
    </div>
  );
}

function FileTable() {
  return (
    <div className="flex min-h-0 flex-1">
      <div className="min-w-0 flex-1 overflow-hidden border-t-2 border-r-2 border-b-2 border-[#9a9ea4] bg-white">
        <table className="w-full table-fixed border-collapse">
          <colgroup>
            {COLUMNS.map((c, i) => (
              <col key={i} style={{ width: c.width }} />
            ))}
          </colgroup>
          <thead>
            <tr className="h-[26px] bg-[#f0f0f0]">
              {COLUMNS.map((c, i) => (
                <th key={i} className="border-r border-b border-[#6e6e6e] p-0 pl-[2px] text-left leading-none font-normal whitespace-nowrap">
                  {c.label}
                </th>
              ))}
            </tr>
          </thead>
          <tbody>
            {Array.from({ length: 8 }, (_, r) => (
              <tr key={r} className="odd:h-8 even:h-[31px]">
                {COLUMNS.map((_, i) => (
                  <td
                    key={i}
                    className={i === 0 ? "border border-l-0 border-[#6e6e6e] bg-[#f0f0f0]" : "border border-[#efefef]"}
                  />
                ))}
              </tr>
            ))}
          </tbody>
        </table>
      </div>
      <Splitter vertical />
    </div>
  );
}

export default function App() {
  return (
    <div className="h-screen min-h-[1039px] bg-black">
      <div className="flex h-full flex-col overflow-hidden rounded-[34px] bg-[#f0f0f0] font-['Noto_Sans_CJK_SC',sans-serif] text-lg leading-none text-black">
        <TitleBar />
        <MenuBar />
        <Toolbar />
        <PathBar />
        <TabStrip tabs={MAIN_TABS} tone="blue" label="主功能" />
        <div className="h-[3px] shrink-0" />
        <TabStrip tabs={SUB_TABS} tone="orange" label="子功能" />
        <main className="grid shrink-0 grid-cols-[306fr_287fr_393fr_315fr_286fr]">
          <AddPanel />
          <ReplacePanel />
          <DeletePanel />
          <NumberPanel />
          <MovePanel />
        </main>
        <div className="pt-[5px]"><Splitter /></div>
        <ListHeader />
        <div className="h-[3px] shrink-0" />
        <FileTable />
        <div className="pt-px"><Splitter /></div>
        <footer className="flex h-[28px] shrink-0 items-center border-t border-[#dcdcdc] whitespace-nowrap">
          <div className="flex w-[42.5%] gap-3 border-r border-[#d4d4d4] py-1 pl-[5px]">
            <span>总共载入对象: 0个</span>
            <span>更名文件列表内对象: 0个</span>
            <span>操作记录: 0条</span>
          </div>
          <span className="w-[8%] border-r border-[#d4d4d4] py-1 pl-[6px]">0.530 秒</span>
          <span className="pl-[7px]">今天是2025年8月12日 星期二，欢迎使用菲菲更名宝贝x64版！</span>
        </footer>
        <div className="h-[5px] shrink-0 bg-[#b2b2b2]" />
      </div>
    </div>
  );
}
